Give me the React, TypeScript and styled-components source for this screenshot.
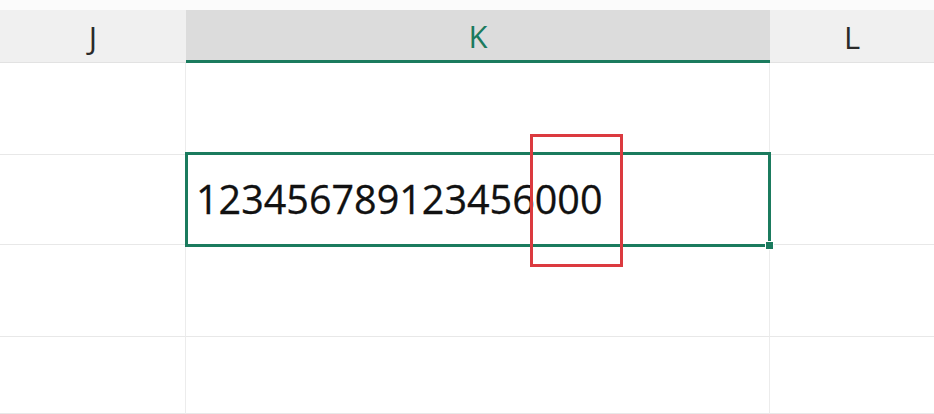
import React from "react";
import styled, { createGlobalStyle } from "styled-components";

const GlobalStyle = createGlobalStyle`
  html, body {
    margin: 0;
    padding: 0;
    background: #ffffff;
    overflow: hidden;
  }
  body {
    font-family: "Open Sans", "Noto Sans", sans-serif;
  }
`;

const GREEN = "#1b7b5e";

const Sheet = styled.div`
  width: 934px;
  height: 414px;
  padding-top: 10px;
  box-sizing: border-box;
  background: #fbfbfb;
  display: grid;
  grid-template-columns: 186px 584px 1fr;
  grid-template-rows: 53px 92px 90px 92px 1fr;
`;

const HeaderCell = styled.div<{ active?: boolean }>`
  display: flex;
  align-items: center;
  justify-content: center;
  background: ${(p) => (p.active ? "#dcdcdc" : "#f0f0f0")};
  color: ${(p) => (p.active ? GREEN : "#2a2a2a")};
  font-size: 31px;
  padding-top: 1px;
  box-sizing: border-box;
  border-bottom: ${(p) => (p.active ? `3px solid ${GREEN}` : "1px solid #e2e2e2")};
`;

const Cell = styled.div<{ last?: boolean }>`
  position: relative;
  background: #ffffff;
  border-right: ${(p) => (p.last ? "none" : "1px solid #ececec")};
  border-bottom: 1px solid #e8e8e8;
  display: flex;
  align-items: center;
  padding-left: 10px;
  font-size: 39.5px;
  color: #111111;
`;

const Selection = styled.div`
  position: absolute;
  z-index: 2;
  left: -1px;
  top: -3px;
  right: -2px;
  bottom: -3px;
  border: 3px solid ${GREEN};
  pointer-events: none;
`;

const FillHandle = styled.div`
  position: absolute;
  right: -6px;
  bottom: -6px;
  width: 7px;
  height: 7px;
  background: ${GREEN};
  border: 1px solid #ffffff;
`;

const Mark = styled.div`
  position: absolute;
  z-index: 3;
  left: 344px;
  top: -21px;
  width: 87px;
  height: 127px;
  border: 3px solid #db3a3f;
  pointer-events: none;
`;

const Value = styled.span`
  position: relative;
  top: -1px;
  -webkit-text-stroke: 0.3px #111111;
`;

const columns = ["J", "K", "L"];
const bodyRows = 4;

export default function App() {
  return (
    <>
      <GlobalStyle />
      <Sheet>
        {columns.map((c) => (
          <HeaderCell key={c} active={c === "K"}>
            {c}
          </HeaderCell>
        ))}
        {Array.from({ length: bodyRows }).map((_, r) =>
          columns.map((c) => (
            <Cell key={`${c}${r}`} last={c === "L"}>
              {r === 1 && c === "K" && (
                <>
                  <Value>123456789123456000</Value>
                  <Selection>
                    <FillHandle />
                  </Selection>
                  <Mark />
                </>
              )}
            </Cell>
          ))
        )}
      </Sheet>
    </>
  );
}
